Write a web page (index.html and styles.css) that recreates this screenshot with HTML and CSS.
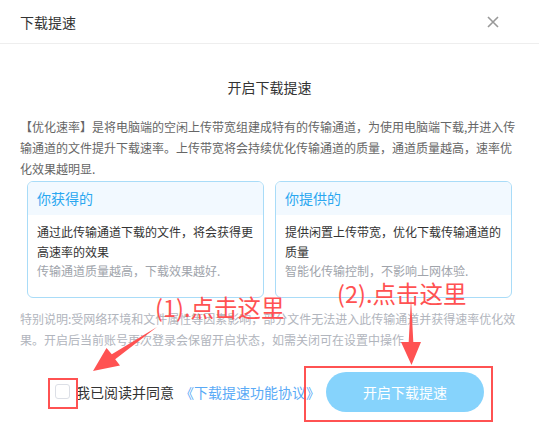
FILE: index.html
```html
<!DOCTYPE html>
<html lang="zh-CN">
<head>
    <meta charset="UTF-8">
    <meta name="viewport" content="width=device-width, initial-scale=1.0">
    <title>下载提速</title>
    <link rel="stylesheet" href="styles.css">
</head>
<body>
    <div class="dialog">
        <div class="dialog-header">
            <span class="dialog-title">下载提速</span>
            <button class="close-btn" aria-label="关闭">
                <svg width="12" height="12" viewBox="0 0 12 12">
                    <path d="M1 1L11 11M11 1L1 11" stroke="#999" stroke-width="1.6" fill="none"/>
                </svg>
            </button>
        </div>

        <div class="dialog-body">
            <h3 class="intro-title">开启下载提速</h3>
            <p class="intro">【优化速率】是将电脑端的空闲上传带宽组建成特有的传输通道，为使用电脑端下载,并进入传输通道的文件提升下载速率。上传带宽将会持续优化传输通道的质量，通道质量越高，速率优化效果越明显.</p>

            <div class="cards">
                <div class="card">
                    <div class="card-head">你获得的</div>
                    <div class="card-body">
                        <div>通过此传输通道下载的文件，将会获得更高速率的效果</div>
                        <div class="muted">传输通道质量越高，下载效果越好.</div>
                    </div>
                </div>
                <div class="card">
                    <div class="card-head">你提供的</div>
                    <div class="card-body">
                        <div>提供闲置上传带宽，优化下载传输通道的质量</div>
                        <div class="muted">智能化传输控制，不影响上网体验.</div>
                    </div>
                </div>
            </div>

            <p class="note">特别说明:受网络环境和文件属性等因素影响，部分文件无法进入此传输通道并获得速率优化效果。开启后当前账号再次登录会保留开启状态，如需关闭可在设置中操作</p>

            <div class="footer">
                <label class="agree">
                    <span class="checkbox"></span>
                    <span>我已阅读并同意</span>
                </label>
                <a href="#" class="agree-link">《下载提速功能协议》</a>
                <button class="start-btn">开启下载提速</button>
            </div>
        </div>

        <!-- 标注 -->
        <div class="mark mark-1">(1).点击这里</div>
        <div class="mark mark-2">(2).点击这里</div>
        <div class="mark-box box-1"></div>
        <div class="mark-box box-2"></div>
        <svg class="arrows" width="539" height="441" viewBox="0 0 539 441">
            <polygon points="157,327 111.8,354.3 106.5,348 93,371 120,365.5 115.2,359.3" fill="#ff5252"/>
            <polygon points="411,298 408.7,342 401,342 411.5,365 421,342 413.3,342" fill="#ff5252"/>
        </svg>
    </div>
</body>
</html>
```

FILE: styles.css
```css
body {
    margin: 0;
    padding: 0;
    background-color: #fff;
    font-family: "Noto Sans CJK SC", "Noto Sans", sans-serif;
    color: #333;
}
.dialog {
    position: relative;
    width: 539px;
    height: 441px;
    background-color: #fff;
    overflow: hidden;
}
.dialog-header {
    height: 43px;
    display: flex;
    align-items: center;
    justify-content: space-between;
    padding: 0 40px 0 20px;
    border-bottom: 1px solid #eeeeee;
}
.dialog-title {
    font-size: 14px;
    color: #333;
}
.close-btn {
    border: none;
    background: none;
    padding: 0;
    width: 12px;
    height: 12px;
    display: flex;
    cursor: pointer;
}
.dialog-body {
    padding: 0 20px;
}
.intro-title {
    margin: 33px 0 0;
    font-size: 14px;
    font-weight: normal;
    line-height: 20px;
    text-align: center;
    color: #333;
}
.intro {
    margin: 19px 0 0;
    font-size: 12px;
    line-height: 21px;
    color: #666;
}
.cards {
    display: flex;
    gap: 11px;
    margin: 2px 7px 0;
}
.card {
    flex: 1;
    border: 1px solid #a9dcf8;
    border-radius: 6px;
    overflow: hidden;
}
.card-head {
    height: 33px;
    line-height: 33px;
    padding-left: 9px;
    background-color: #f2f9ff;
    font-size: 14px;
    color: #2aa7f0;
}
.card-body {
    padding: 7px 8px 16px 9px;
    font-size: 12px;
    line-height: 19.5px;
    color: #333;
}
.card-body .muted {
    color: #a0a4ab;
}
.note {
    margin: 10px 0 0;
    font-size: 12px;
    line-height: 21px;
    color: #b1b5bd;
}
.footer {
    display: flex;
    align-items: center;
    justify-content: center;
    margin-top: 22px;
}
.agree {
    display: flex;
    align-items: center;
    gap: 6px;
    font-size: 14px;
    color: #333;
}
.checkbox {
    width: 13px;
    height: 13px;
    border: 1px solid #dcdfe6;
    border-radius: 3px;
    background: #fff;
}
.agree-link {
    margin-left: 6px;
    font-size: 14px;
    color: #5aaaf6;
    text-decoration: none;
}
.start-btn {
    margin-left: 6px;
    width: 158px;
    height: 40px;
    border: none;
    border-radius: 20px;
    background-color: #86d3fc;
    color: #fff;
    font-family: inherit;
    font-size: 14px;
    cursor: pointer;
}
.mark {
    position: absolute;
    font-size: 23.5px;
    line-height: 22px;
    color: #ff5252;
    white-space: nowrap;
}
.mark-1 {
    left: 155px;
    top: 296px;
}
.mark-2 {
    left: 337px;
    top: 282px;
}
.mark-box {
    position: absolute;
    border: 2px solid #ff5252;
}
.box-1 {
    left: 48px;
    top: 378px;
    width: 26px;
    height: 27px;
}
.box-2 {
    left: 304px;
    top: 366px;
    width: 185px;
    height: 52px;
}
.arrows {
    position: absolute;
    left: 0;
    top: 0;
    pointer-events: none;
}
```
